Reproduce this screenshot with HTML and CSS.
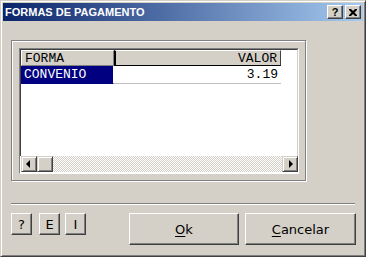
FILE: index.html
```
<!DOCTYPE html>
<html lang="pt">

<head>
  <meta charset="UTF-8" />
  <title>Formas de Pagamento</title>
  <link rel="stylesheet" href="styles.css">
</head>

<body>
  <div class="window">
    <div class="titlebar">
      <span class="title">FORMAS DE PAGAMENTO</span>
      <div class="caption-btns">
        <div class="cap-btn cap-help">?</div>
        <div class="cap-btn">
          <svg width="8" height="7" viewBox="0 0 8 7">
            <path d="M0 0h2l2 2 2-2h2v1L5.5 3.5 8 6v1H6L4 5 2 7H0V6l2.5-2.5L0 1z" fill="#000" />
          </svg>
        </div>
      </div>
    </div>

    <div class="client">
      <div class="groupbox">
        <div class="grid">
          <div class="grid-body">
            <div class="grid-row header">
              <div class="cell col-forma">FORMA</div>
              <div class="cell col-valor">VALOR</div>
            </div>
            <div class="grid-row data">
              <div class="cell col-forma selected">CONVENIO</div>
              <div class="cell col-valor">3.19</div>
            </div>
          </div>
          <div class="hscroll">
            <div class="sb-btn"><span class="arrow-left"></span></div>
            <div class="sb-btn thumb"></div>
            <div class="sb-track"></div>
            <div class="sb-btn"><span class="arrow-right"></span></div>
          </div>
        </div>
      </div>

      <div class="separator"></div>

      <div class="button-row">
        <div class="btn small">?</div>
        <div class="btn small btn-e">E</div>
        <div class="btn small btn-i">I</div>
        <div class="btn big btn-ok"><u>O</u>k</div>
        <div class="btn big btn-cancel"><u>C</u>ancelar</div>
      </div>
    </div>
  </div>
</body>

</html>
```

FILE: styles.css
```
body {
  margin: 0;
  background-color: #d4d0c8;
  font-family: 'DejaVu Sans', sans-serif;
}

.window {
  width: 366px;
  height: 257px;
  box-sizing: border-box;
  background-color: #d4d0c8;
  border: 1px solid;
  border-color: #d4d0c8 #404040 #404040 #d4d0c8;
  box-shadow: inset 1px 1px 0 #fff, inset -1px -1px 0 #808080;
  padding: 2px;
}

/* title bar */
.titlebar {
  height: 18px;
  display: flex;
  align-items: center;
  justify-content: space-between;
  background: linear-gradient(to right, #0a246a, #a6caf0);
  padding: 0 2px 0 2px;
}

.title {
  font-family: 'Liberation Sans', sans-serif;
  font-weight: bold;
  font-size: 11px;
  color: #fff;
}

.caption-btns {
  display: flex;
  gap: 2px;
}

.cap-btn {
  width: 16px;
  height: 14px;
  box-sizing: border-box;
  background-color: #d4d0c8;
  border: 1px solid;
  border-color: #fff #404040 #404040 #fff;
  box-shadow: inset -1px -1px 0 #808080;
  display: flex;
  align-items: center;
  justify-content: center;
}

.cap-help {
  font-family: 'Liberation Sans', sans-serif;
  font-weight: bold;
  font-size: 11px;
  line-height: 1;
}

/* client area */
.client {
  padding: 19px 0 0 8px;
}

.groupbox {
  width: 295px;
  height: 141px;
  box-sizing: border-box;
  border: 1px solid #808080;
  box-shadow: inset 1px 1px 0 #fff, 1px 1px 0 #fff;
  padding: 7px 0 0 7px;
}

.grid {
  width: 280px;
  height: 126px;
  box-sizing: border-box;
  border: 1px solid;
  border-color: #808080 #fff #fff #808080;
  background-color: #fff;
  display: flex;
  flex-direction: column;
}

.grid-body {
  flex: 1;
  border: 1px solid;
  border-color: #404040 #d4d0c8 #d4d0c8 #404040;
  border-bottom: none;
  font-family: 'Liberation Mono', monospace;
  font-size: 13px;
}

.grid-row {
  display: flex;
}

.cell {
  box-sizing: border-box;
  padding: 0 3px;
  white-space: nowrap;
}

.col-forma {
  width: 93px;
}

.col-valor {
  width: 167px;
  text-align: right;
}

.header .cell {
  height: 16px;
  line-height: 16px;
  background-color: #d4d0c8;
  border: 1px solid;
  border-color: #fff #808080 #808080 #fff;
}

.header .col-valor {
  border-color: #fff #404040 #000 #000;
  border-left-width: 2px;
}

.data .cell {
  height: 18px;
  line-height: 17px;
  border-bottom: 1px solid #c0c0c0;
}

.data .selected {
  background-color: #000080;
  color: #fff;
  border-bottom-color: #000080;
  border-right: 1px solid #fff;
}

/* horizontal scroll bar */
.hscroll {
  display: flex;
  height: 16px;
  margin-left: 1px;
  margin-bottom: 1px;
}

.sb-btn {
  width: 16px;
  height: 16px;
  box-sizing: border-box;
  background-color: #d4d0c8;
  border: 1px solid;
  border-color: #d4d0c8 #404040 #404040 #d4d0c8;
  box-shadow: inset 1px 1px 0 #fff, inset -1px -1px 0 #808080;
  display: flex;
  align-items: center;
  justify-content: center;
}

.sb-track {
  flex: 1;
  background: repeating-conic-gradient(#fff 0 25%, #d4d0c8 0 50%) 0 0 / 2px 2px;
}

.arrow-left {
  width: 0;
  height: 0;
  border-top: 4px solid transparent;
  border-bottom: 4px solid transparent;
  border-right: 4px solid #000;
  margin-left: -2px;
}

.arrow-right {
  width: 0;
  height: 0;
  border-top: 4px solid transparent;
  border-bottom: 4px solid transparent;
  border-left: 4px solid #000;
  margin-left: 1px;
}

/* separator and buttons */
.separator {
  width: 344px;
  height: 2px;
  box-sizing: border-box;
  margin-top: 22px;
  border-top: 1px solid #808080;
  border-bottom: 1px solid #fff;
}

.button-row {
  display: flex;
  align-items: flex-start;
  margin-top: 8px;
}

.btn {
  box-sizing: border-box;
  background-color: #d4d0c8;
  border: 1px solid;
  border-color: #fff #404040 #404040 #fff;
  box-shadow: inset -1px -1px 0 #808080;
  display: flex;
  align-items: center;
  justify-content: center;
  font-size: 13px;
  color: #000;
}

.btn u {
  text-decoration-thickness: 1px;
  text-underline-offset: 2px;
}

.small {
  width: 21px;
  height: 22px;
  font-size: 13px;
}

.btn-e {
  margin-left: 7px;
}

.btn-i {
  margin-left: 5px;
}

.big {
  width: 110px;
  height: 32px;
}

.btn-ok {
  margin-left: 43px;
}

.btn-cancel {
  margin-left: 6px;
  width: 111px;
}
```
